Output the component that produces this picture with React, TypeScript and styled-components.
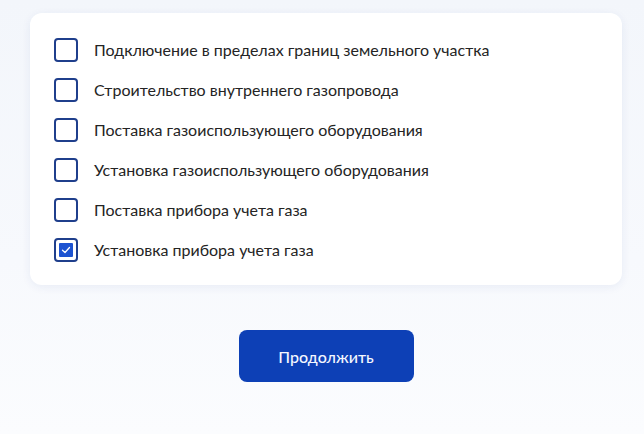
import React, { useState } from "react";
import styled, { createGlobalStyle } from "styled-components";

const Global = createGlobalStyle`
  html, body { margin: 0; padding: 0; background: #f8f9fd; }
  body { font-family: Lato, "Noto Sans", sans-serif; }
`;

const Page = styled.div`
  width: 644px;
  height: 434px;
  box-sizing: border-box;
  padding: 13px 22px 0 30px;
  display: flex;
  flex-direction: column;
  align-items: stretch;
  background: linear-gradient(180deg, #f3f6fb 0%, #f7f9fd 60%, #fbfcfe 100%);
`;

const Card = styled.div`
  background: #ffffff;
  border-radius: 12px;
  box-shadow: 0 2px 10px rgba(30, 60, 140, 0.07);
  padding: 25px 24px 23px;
  display: flex;
  flex-direction: column;
  gap: 16px;
`;

const Row = styled.label`
  display: flex;
  align-items: center;
  gap: 16px;
  cursor: pointer;
  height: 24px;
`;

const Box = styled.span<{ $checked: boolean }>`
  width: 24px;
  height: 24px;
  box-sizing: border-box;
  border: 2px solid #1f3f8c;
  border-radius: 4px;
  padding: 3px;
  flex-shrink: 0;
  display: flex;
`;

const Fill = styled.span`
  flex: 1;
  background: #1d53d1;
  border-radius: 1px;
  display: flex;
  align-items: center;
  justify-content: center;
`;

const Label = styled.span`
  font-size: 16px;
  color: #242424;
  line-height: 20px;
`;

const Footer = styled.div`
  display: flex;
  justify-content: center;
  padding-top: 45px;
`;

const Button = styled.button`
  width: 175px;
  height: 52px;
  border: none;
  border-radius: 8px;
  background: #0d40b6;
  color: #f4f7ff;
  font-family: Lato, "Noto Sans", sans-serif;
  font-size: 16px;
  font-weight: 500;
`;

const items = [
  "Подключение в пределах границ земельного участка",
  "Строительство внутреннего газопровода",
  "Поставка газоиспользующего оборудования",
  "Установка газоиспользующего оборудования",
  "Поставка прибора учета газа",
  "Установка прибора учета газа",
];

export default function App() {
  const [checked, setChecked] = useState<boolean[]>([false, false, false, false, false, true]);
  return (
    <>
      <Global />
      <Page>
        <Card>
          {items.map((t, i) => (
            <Row
              key={t}
              onClick={() => setChecked((c) => c.map((v, j) => (j === i ? !v : v)))}
            >
              <Box $checked={checked[i]}>
                {checked[i] && (
                  <Fill>
                    <svg width="10" height="8" viewBox="0 0 10 8" fill="none">
                      <path d="M1.5 4.2 L4 6.5 L8.5 1.5" stroke="#fff" strokeWidth="1.3" strokeLinecap="round" strokeLinejoin="round" />
                    </svg>
                  </Fill>
                )}
              </Box>
              <Label>{t}</Label>
            </Row>
          ))}
        </Card>
        <Footer>
          <Button>Продолжить</Button>
        </Footer>
      </Page>
    </>
  );
}
